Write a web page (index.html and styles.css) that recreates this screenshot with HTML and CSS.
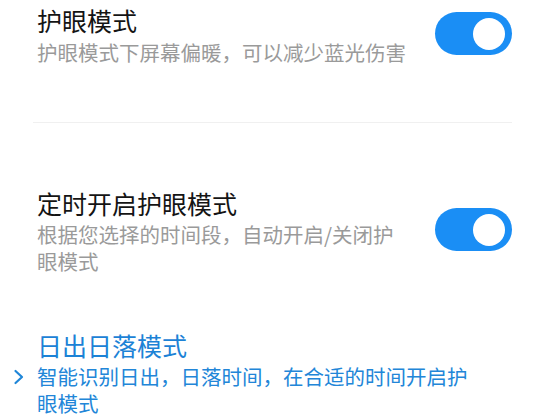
FILE: index.html
```html
<!DOCTYPE html>
<html lang="zh-CN">
<head>
<meta charset="utf-8">
<title>护眼模式</title>
<link rel="stylesheet" href="styles.css">
</head>
<body>
<div class="page">
  <div class="row row-first">
    <div class="text">
      <div class="title">护眼模式</div>
      <div class="desc">护眼模式下屏幕偏暖，可以减少蓝光伤害</div>
    </div>
    <div class="toggle"><div class="knob"></div></div>
  </div>
  <div class="divider"></div>
  <div class="row row-second">
    <div class="text text-narrow">
      <div class="title">定时开启护眼模式</div>
      <div class="desc">根据您选择的时间段，自动开启/关闭护眼模式</div>
    </div>
    <div class="toggle"><div class="knob"></div></div>
  </div>
  <div class="row row-third">
    <div class="text text-wide">
      <div class="title title-blue">日出日落模式</div>
      <div class="desc desc-blue">
        <svg class="chevron" width="12" height="16" viewBox="0 0 12 16"><polyline points="2.5,2 9,8 2.5,14" fill="none" stroke="#1f86d8" stroke-width="2.2" stroke-linecap="round" stroke-linejoin="round"/></svg>
        智能识别日出，日落时间，在合适的时间开启护眼模式
      </div>
    </div>
  </div>
</div>
</body>
</html>
```

FILE: styles.css
```css
html, body {
  margin: 0;
  padding: 0;
  background: #ffffff;
}
body {
  font-family: "Noto Sans CJK SC", "Noto Sans", sans-serif;
  width: 550px;
  height: 417px;
  overflow: hidden;
}
.page {
  display: flex;
  flex-direction: column;
}
.row {
  display: flex;
  justify-content: space-between;
  align-items: center;
  padding: 0 38px 0 37px;
}
.row-first {
  padding-top: 5px;
}
.row-second {
  margin-top: 65px;
}
.row-third {
  margin-top: 55px;
}
.text {
  display: flex;
  flex-direction: column;
  gap: 4px;
}
.row-second .text,
.row-third .text {
  gap: 3px;
}
.text-narrow {
  width: 370px;
}
.text-wide {
  width: 445px;
}
.title {
  font-size: 25px;
  line-height: 30px;
  color: #141414;
}
.title-blue {
  color: #1c82d6;
}
.desc {
  font-size: 20.5px;
  line-height: 27px;
  color: #9a9a9a;
  position: relative;
}
.desc-blue {
  color: #2286d8;
}
.chevron {
  position: absolute;
  left: -24px;
  top: 6px;
}
.toggle {
  width: 77px;
  height: 43px;
  border-radius: 22px;
  background: #1a8ef5;
  display: flex;
  align-items: center;
  justify-content: flex-end;
  padding-right: 7px;
  box-sizing: border-box;
  margin-bottom: 4px;
  flex-shrink: 0;
}
.knob {
  width: 32px;
  height: 32px;
  border-radius: 50%;
  background: #ffffff;
}
.divider {
  margin: 56px 38px 0 33px;
  height: 1px;
  background: #f0f0f0;
}
```
